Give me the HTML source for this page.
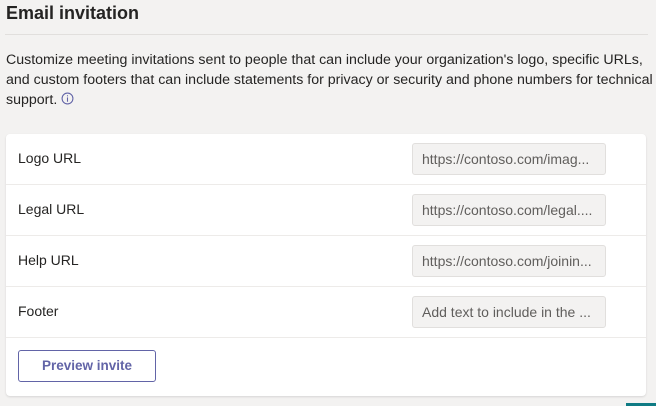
<!DOCTYPE html>
<html><head><style>
body{margin:0;width:656px;height:406px;background:#f3f2f1;font-family:"Segoe UI","Liberation Sans",sans-serif;color:#252423;position:relative;overflow:hidden}
h1{position:absolute;left:6px;top:0;margin:0;font-size:18px;font-weight:bold;line-height:26px}
.sep{position:absolute;left:5px;width:643px;top:34px;height:1px;background:#e1dfdd}
p{position:absolute;left:6px;top:50px;margin:0;font-size:14.2px;line-height:20px;white-space:nowrap}
.card{position:absolute;left:6px;top:134px;width:640px;height:262px;background:#fff;border-radius:4px;box-shadow:0 1px 2px rgba(0,0,0,.12)}
.row{position:absolute;left:0;width:640px;height:50px;border-bottom:1px solid #edebe9}
.row span{position:absolute;left:12px;top:16px;font-size:14px}
.in{position:absolute;left:406px;top:9px;border:1px solid #e1dfdd;border-radius:3px;background:#f3f2f1;color:#605e5c;font-size:14px;line-height:30px;padding-left:9px;box-sizing:border-box;width:194px;height:32px}
.btn{position:absolute;left:12px;top:216px;width:138px;height:32px;box-sizing:border-box;border:1px solid #6264a7;border-radius:3px;color:#6264a7;font-weight:bold;font-size:13.5px;text-align:center;line-height:30px}
.teal{position:absolute;left:626px;top:403px;width:30px;height:3px;background:#0f7b84}
</style></head><body>
<h1>Email invitation</h1>
<div class="sep"></div>
<p>Customize meeting invitations sent to people that can include your organization's logo, specific URLs,<br>and custom footers that can include statements for privacy or security and phone numbers for technical<br>support. <svg width="13" height="13" viewBox="0 0 12 12" style="vertical-align:-1px"><circle cx="6" cy="6" r="5" fill="none" stroke="#6264a7" stroke-width="1"/><rect x="5.5" y="5" width="1" height="4" fill="#6264a7"/><rect x="5.5" y="3" width="1" height="1" fill="#6264a7"/></svg></p>
<div class="card">
<div class="row" style="top:0"><span>Logo URL</span><div class="in">https://contoso.com/imag...</div></div>
<div class="row" style="top:51px"><span>Legal URL</span><div class="in">https://contoso.com/legal....</div></div>
<div class="row" style="top:102px"><span>Help URL</span><div class="in">https://contoso.com/joinin...</div></div>
<div class="row" style="top:153px"><span>Footer</span><div class="in">Add text to include in the ...</div></div>
<div class="btn">Preview invite</div>
</div>
<div class="teal"></div>
</body></html>
